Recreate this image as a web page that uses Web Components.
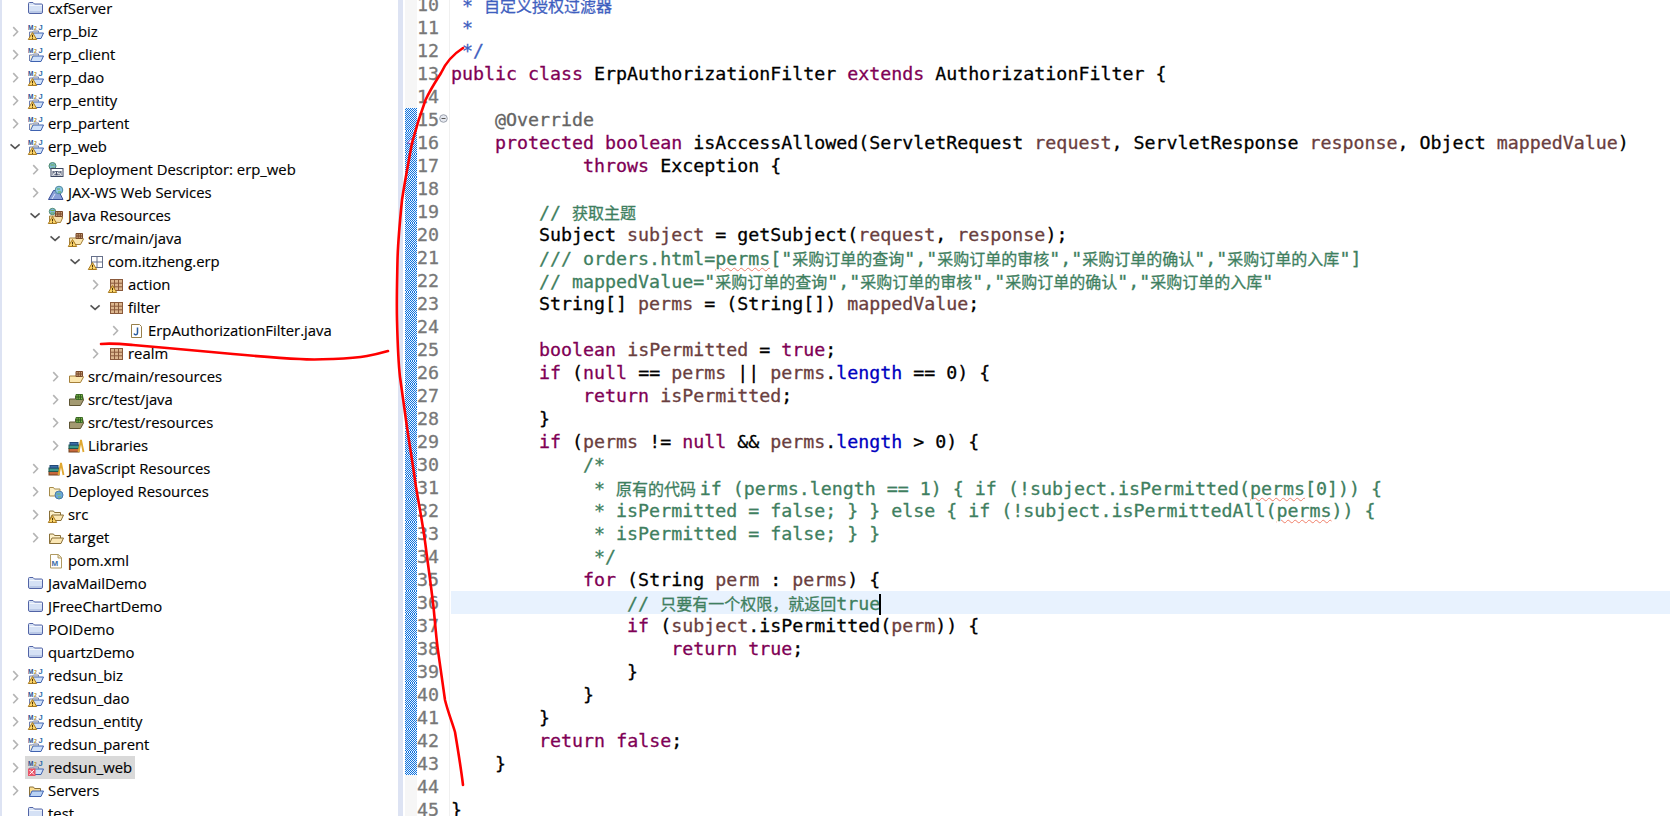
<!DOCTYPE html>
<html>
<head>
<meta charset="utf-8">
<title>ErpAuthorizationFilter.java</title>
<style>
  html, body { margin: 0; height: 100%; overflow: hidden; background: #fff; }
</style>
</head>
<body>
<ide-window>
  <project-tree>
    <tree-row icon="project">cxfServer</tree-row>
    <tree-row arrow="closed" icon="maven" warn>erp_biz</tree-row>
    <tree-row arrow="closed" icon="maven">erp_client</tree-row>
    <tree-row arrow="closed" icon="maven" warn>erp_dao</tree-row>
    <tree-row arrow="closed" icon="maven" warn>erp_entity</tree-row>
    <tree-row arrow="closed" icon="maven">erp_partent</tree-row>
    <tree-row arrow="open" icon="maven" warn>erp_web</tree-row>
    <tree-row level="1" arrow="closed" icon="descriptor">Deployment Descriptor: erp_web</tree-row>
    <tree-row level="1" arrow="closed" icon="webservice">JAX-WS Web Services</tree-row>
    <tree-row level="1" arrow="open" icon="javares" warn>Java Resources</tree-row>
    <tree-row level="2" arrow="open" icon="srcfolder" warn>src/main/java</tree-row>
    <tree-row level="3" arrow="open" icon="pkgempty" warn>com.itzheng.erp</tree-row>
    <tree-row level="4" arrow="closed" icon="pkg" warn>action</tree-row>
    <tree-row level="4" arrow="open" icon="pkg">filter</tree-row>
    <tree-row level="5" arrow="closed" icon="javafile">ErpAuthorizationFilter.java</tree-row>
    <tree-row level="4" arrow="closed" icon="pkg">realm</tree-row>
    <tree-row level="2" arrow="closed" icon="srcfolder">src/main/resources</tree-row>
    <tree-row level="2" arrow="closed" icon="testfolder">src/test/java</tree-row>
    <tree-row level="2" arrow="closed" icon="testfolder">src/test/resources</tree-row>
    <tree-row level="2" arrow="closed" icon="library">Libraries</tree-row>
    <tree-row level="1" arrow="closed" icon="library">JavaScript Resources</tree-row>
    <tree-row level="1" arrow="closed" icon="deployed">Deployed Resources</tree-row>
    <tree-row level="1" arrow="closed" icon="folder" warn>src</tree-row>
    <tree-row level="1" arrow="closed" icon="folder">target</tree-row>
    <tree-row level="1" icon="pom">pom.xml</tree-row>
    <tree-row icon="project">JavaMailDemo</tree-row>
    <tree-row icon="project">JFreeChartDemo</tree-row>
    <tree-row icon="project">POIDemo</tree-row>
    <tree-row icon="project">quartzDemo</tree-row>
    <tree-row arrow="closed" icon="maven" warn>redsun_biz</tree-row>
    <tree-row arrow="closed" icon="maven" warn>redsun_dao</tree-row>
    <tree-row arrow="closed" icon="maven" warn>redsun_entity</tree-row>
    <tree-row arrow="closed" icon="maven">redsun_parent</tree-row>
    <tree-row arrow="closed" icon="maven" error selected>redsun_web</tree-row>
    <tree-row arrow="closed" icon="servers">Servers</tree-row>
    <tree-row icon="project">test</tree-row>
  </project-tree>
  <code-editor></code-editor>
  <ink-marks></ink-marks>
</ide-window>

<script>
const ICONS = {
  project: `<path d="M.5 4V2.500a1 1 0 0 1 1-1h3.500l1.500 1.500h7a1 1 0 0 1 1 1v7a1.500 1.500 0 0 1-1.500 1.500h-11a1.500 1.500 0 0 1-1.500-1.500z" fill="#d5e1f5" stroke="#5264a6"/><path d="M1.500 4.500h12.500" stroke="#f2f6fc"/><path d="M1.500 11h12.500" stroke="#9fb0d8"/>`,
  maven: `<path d="M1.500 14V8h3l1-1h5v1.500" fill="#fdf3d3" stroke="#6f7fb0"/><path d="M2.500 14.500l2.500-5.500h10.500l-2.500 5.500z" fill="#cfe0f8" stroke="#3f62b0"/><text x="0" y="6" font-family="Liberation Sans" font-size="6.500" font-weight="700" fill="#2d4f8f">M</text><text x="6" y="6" font-family="Liberation Sans" font-size="5" font-weight="700" fill="#b08a2e">2</text><text x="10.500" y="6" font-family="Liberation Sans" font-size="7.500" font-weight="700" fill="#2d6aa8">J</text>`,
  descriptor: `<circle cx="4.500" cy="4" r="3.500" fill="#7fb7d8" stroke="#4d8a6e"/><path d="M2.500 3h4M3.500 6h3" stroke="#6bb04a"/><rect x="3" y="6.500" width="12" height="8" fill="#fff" stroke="#3c4660"/><rect x="4.500" y="9" width="9" height="4.500" fill="#46506a"/><path d="M5.500 10h2v1.500h-2v1.500h2M9.500 10h3M9.500 10v1.500h3v1.500h-3" stroke="#fff" fill="none" stroke-width=".8"/>`,
  webservice: `<path d="M.5 14.500l5-9h5l4.500 9z" fill="#8aa0d8" stroke="#3a4f98"/><path d="M4 14l3-5" stroke="#dfe6f8"/><circle cx="11" cy="5" r="3.800" fill="#8cc4e4" stroke="#4d8a9e"/><path d="M9 4h3M10 7h3" stroke="#5fae4a"/>`,
  javares: `<circle cx="4.500" cy="3.500" r="3.200" fill="#7fb7d8" stroke="#4d8a6e"/><path d="M2.500 2.500h4M3 5h3" stroke="#6bb04a"/><path d="M1.500 14V8h9l4 1v1l-2 4.500z" fill="#f6dfa8" stroke="#a5803a"/><path d="M7.500 3.500h7v5h-7z" fill="#c8a27a" stroke="#7a4b2c"/><path d="M9.800 3.500v5M12.200 3.500v5M7.500 6h7" stroke="#7a4b2c"/>`,
  srcfolder: `<path d="M1.500 13.500V7h8V3h5v4l1 1-3 5.500z" fill="#fbe6ae" stroke="#a5803a"/><path d="M8 2.500h6.500v5H8z" fill="#c8a27a" stroke="#7a4b2c"/><path d="M10.200 2.500v5M12.400 2.500v5M8 5h6.500" stroke="#7a4b2c"/>`,
  testfolder: `<path d="M1.500 13.500V7h6V4h7l1 4-3 5.500z" fill="#a39a72" stroke="#5e5433"/><path d="M8 2.500h6.500v5H8z" fill="#7fb84a" stroke="#3f6e2a"/><path d="M10.200 2.500v5M12.400 2.500v5M8 5h6.500" stroke="#2f5a1f"/>`,
  pkgempty: `<rect x="3.500" y="2.500" width="11" height="11" fill="#fff" stroke="#66708a"/><path d="M9 2.500v11M3.500 8h11" stroke="#66708a"/>`,
  pkg: `<rect x="2.500" y="2.500" width="12" height="11" fill="#dcb68e" stroke="#8a5a3c"/><path d="M6.500 2.500v11M10.500 2.500v11M2.500 6.200h12M2.500 9.800h12" stroke="#8a5a3c"/>`,
  javafile: `<path d="M3.500 1.500h8l2 2v11h-10z" fill="#fff" stroke="#98804a"/><path d="M9.500 4.500v5.500a1.800 1.800 0 0 1-3.500.5" fill="none" stroke="#2a5c9e" stroke-width="1.500"/>`,
  library: `<rect x="1" y="10.500" width="10" height="3.500" fill="#c8683c" stroke="#70401f"/><rect x="1" y="7" width="10" height="3.500" fill="#3f9a8a" stroke="#1d5a50"/><rect x="2" y="4.500" width="8" height="2.500" fill="#3a6ea8" stroke="#234a78"/><path d="M10.500 14L13 2l2.500 12" fill="none" stroke="#e0a830" stroke-width="1.800"/>`,
  deployed: `<path d="M1.500 12V3.500h4l1 1.500h5.500v7z" fill="#fdf0c8" stroke="#a58a4a"/><circle cx="11" cy="11" r="4" fill="#6aa8dc" stroke="#4a7aa8"/><path d="M8.500 10h4M10 13h3" stroke="#78b85a"/>`,
  folder: `<path d="M1.500 13.500V4h4l1 1.500h6V8" fill="#fdf0c8" stroke="#8a7038"/><path d="M1.500 13.500l2.500-5.500h11.500l-2.500 5.500z" fill="#fbe7b4" stroke="#8a7038"/>`,
  pom: `<path d="M2.500 1.500h8l3 3v10.500h-11z" fill="#fff" stroke="#b09a62"/><path d="M10 1.500v3.500h3.500" fill="#efe4c4" stroke="#b09a62"/><text x="3.500" y="12.800" font-family="Liberation Sans" font-size="8" font-weight="700" fill="#3d6ea8">M</text>`,
  servers: `<path d="M1.500 13.500V4h4l1 1.500h6V8" fill="#fbdf92" stroke="#8a7038"/><path d="M1.500 13.500l2.500-5.500h11.500l-2.500 5.500z" fill="#b9d2f4" stroke="#3f62b0"/>`
}

class TreeRow extends HTMLElement {
  constructor() {
    super();
    this.attachShadow({ mode: "open" });
  }
  connectedCallback() {
    const level = Number(this.getAttribute("level") || 0);
    const arrow = this.getAttribute("arrow");
    const name = this.getAttribute("icon");
    let chevron = "";
    if (arrow == "closed") chevron = `<path d="M3 2l4 4.200-4 4.200" fill="none" stroke="#b4b4b4" stroke-width="1.500"/>`;
    if (arrow == "open") chevron = `<path d="M.5 4l4.200 3.800L8.900 4" fill="none" stroke="#555" stroke-width="1.500"/>`;
    let badge = "";
    if (this.hasAttribute("warn")) badge = `<path d="M4.500 8.500L8.700 15.500H.3z" fill="#fbd469" stroke="#a87a20" stroke-linejoin="round"/><path d="M4.500 10.800v2.600M4.500 14v.8" stroke="#4a3006"/>`;
    if (this.hasAttribute("error")) badge = `<rect x="0" y="8.500" width="7.500" height="7.500" fill="#e8556a"/><path d="M1.500 10l4.500 4.500M6 10l-4.500 4.500" stroke="#fff"/>`;
    this.shadowRoot.innerHTML = `
      <style>
        :host {
          display: flex;
          align-items: center;
          height: 23px;
          padding-left: calc(${level} * 20px + 8px);
          font: 14.85px "Open Sans", "Noto Sans", sans-serif;
          -webkit-text-stroke: .15px #000;
          color: #000;
          white-space: nowrap;
        }
        .arrow { width: 13px; height: 13px; flex: none; margin-right: 5px; }
        .icon { width: 16px; height: 16px; flex: none; margin-right: 4px; overflow: visible; }
        .label { padding-right: 3px; line-height: 23px; }
        .bg { display: flex; align-items: center; padding-left: 3px; margin-left: -3px; }
        :host([selected]) .bg { background: #d9d9d9; }
      </style>
      <svg class="arrow" viewBox="0 0 12 12">${chevron}</svg>
      <div class="bg">
        <svg class="icon" viewBox="0 0 16 16">${ICONS[name] || ""}${badge}</svg>
        <span class="label"><slot></slot></span>
      </div>`;
  }
}
customElements.define("tree-row", TreeRow);

class ProjectTree extends HTMLElement {
  constructor() {
    super();
    this.attachShadow({ mode: "open" });
    this.shadowRoot.innerHTML = `
      <style>
        :host {
          display: block;
          flex: none;
          width: 398px;
          height: 816px;
          overflow: hidden;
          box-sizing: border-box;
          border-left: 2px solid #dde3f3;
        }
        .rows { margin-top: -3px; }
      </style>
      <div class="rows"><slot></slot></div>`;
  }
}
customElements.define("project-tree", ProjectTree);

// {k|..} keyword  {v|..} local var  {f|..} field  {a|..} annotation  {c|..} comment  {d|..} javadoc  {w|..} spell squiggle
const SOURCE = [
  [10, "{d| * 自定义授权过滤器}"],
  [11, "{d| *}"],
  [12, "{d| */}"],
  [13, "{k|public} {k|class} ErpAuthorizationFilter {k|extends} AuthorizationFilter {"],
  [14, ""],
  [15, "    {a|@Override}"],
  [16, "    {k|protected} {k|boolean} isAccessAllowed(ServletRequest {v|request}, ServletResponse {v|response}, Object {v|mappedValue})"],
  [17, "            {k|throws} Exception {"],
  [18, ""],
  [19, "        {c|// 获取主题}"],
  [20, "        Subject {v|subject} = getSubject({v|request}, {v|response});"],
  [21, "        {c|/// orders.html=}{w|perms}{c|[\"采购订单的查询\",\"采购订单的审核\",\"采购订单的确认\",\"采购订单的入库\"]}"],
  [22, "        {c|// mappedValue=\"采购订单的查询\",\"采购订单的审核\",\"采购订单的确认\",\"采购订单的入库\"}"],
  [23, "        String[] {v|perms} = (String[]) {v|mappedValue};"],
  [24, ""],
  [25, "        {k|boolean} {v|isPermitted} = {k|true};"],
  [26, "        {k|if} ({k|null} == {v|perms} || {v|perms}.{f|length} == 0) {"],
  [27, "            {k|return} {v|isPermitted};"],
  [28, "        }"],
  [29, "        {k|if} ({v|perms} != {k|null} && {v|perms}.{f|length} > 0) {"],
  [30, "            {c|/*}"],
  [31, "             {c|* 原有的代码 if (perms.length == 1) { if (!subject.isPermitted(}{w|perms}{c|[0])) {}"],
  [32, "             {c|* isPermitted = false; } } else { if (!subject.isPermittedAll(}{w|perms}{c|)) {}"],
  [33, "             {c|* isPermitted = false; } }}"],
  [34, "             {c|*/}"],
  [35, "            {k|for} (String {v|perm} : {v|perms}) {"],
  [36, "                {c|// 只要有一个权限，就返回true}"],
  [37, "                {k|if} ({v|subject}.isPermitted({v|perm})) {"],
  [38, "                    {k|return} {k|true};"],
  [39, "                }"],
  [40, "            }"],
  [41, "        }"],
  [42, "        {k|return} {k|false};"],
  [43, "    }"],
  [44, ""],
  [45, "}"]
];

function escapeHtml(s) {
  return s.replace(/&/g, "&amp;").replace(/</g, "&lt;").replace(/>/g, "&gt;");
}

// the CJK run and the space after it come from the CJK font
function cjk(s) {
  return s.replace(/[\u3000-\u9fff\uff00-\uffef]+ ?/g, m => `<span class="cjk">${m}</span>`);
}

function highlight(src) {
  let out = "";
  let i = 0;
  while (i < src.length) {
    if (src[i] == "{" && src[i + 2] == "|") {
      const kind = src[i + 1];
      let end = src.indexOf("}", i);
      if (kind == "c" || kind == "d") {
        // comments hold braces themselves: they end at the last } before the next token
        const next = src.indexOf("{w|", i);
        end = src.lastIndexOf("}", (next == -1 ? src.length : next) - 1);
      }
      out += `<span class="${kind}">${cjk(escapeHtml(src.slice(i + 3, end)))}</span>`;
      i = end + 1;
    } else {
      out += escapeHtml(src[i]);
      i++;
    }
  }
  return out;
}

class CodeEditor extends HTMLElement {
  constructor() {
    super();
    this.attachShadow({ mode: "open" });
    const rows = SOURCE.map(([n, src]) => {
      const current = n == 36 ? " current" : "";
      const caret = n == 36 ? `<i class="caret"></i>` : "";
      const ruler = n >= 15 && n <= 43 ? " changed" : "";
      const fold = n == 15 ? `<svg class="fold" viewBox="0 0 9 9"><circle cx="4.500" cy="4.500" r="3.800" fill="#e6e9f0" stroke="#9aa0ac"/><path d="M2.500 4.500h4" stroke="#555"/></svg>` : "";
      const over = n == 16 ? `<svg class="over" viewBox="0 0 8 6"><path d="M4 .5l3.500 5H.5z" fill="#f4f0fb" stroke="#8a64c0"/></svg>` : "";
      return `<div class="row">
        <div class="ruler${ruler}">${over}</div>
        <div class="num">${n}</div>
        <div class="foldcol">${fold}</div>
        <div class="text${current}">${highlight(src)}${caret}</div>
      </div>`;
    }).join("");
    this.shadowRoot.innerHTML = `
      <style>
        :host {
          display: flex;
          flex: 1;
          min-width: 0;
          height: 816px;
          overflow: hidden;
          font: 18.29px "DejaVu Sans Mono", "Noto Sans CJK SC", monospace;
          -webkit-text-stroke: .3px;
          color: #000;
        }
        .sash { flex: none; width: 5px; background: #dde3f3; margin-right: 2px; }
        .lines { flex: 1; margin-top: -7px; min-width: 0; }
        .row { display: flex; height: 23px; line-height: 23px; white-space: pre; }
        .ruler { position: relative; flex: none; width: 12px; background: #f6f6f6; }
        .ruler.changed { background: repeating-conic-gradient(#0f72dd 0 25%, #eaf4ff 0 50%) 0 0 / 2px 2px; }
        .num { flex: none; width: 22px; color: #787878; text-align: right; }
        .foldcol { flex: none; width: 10px; border-right: 1px solid #f0f0f0; position: relative; margin-right: 1px; }
        .text { flex: 1; min-width: 0; }
        .current { background: #e8f2fe; }
        .caret { display: inline-block; width: 2px; height: 21px; background: #000; vertical-align: -5px; margin-left: -1px; }
        .k { color: #7f0055; }
        .v { color: #6a3e3e; }
        .f { color: #0000c0; }
        .a { color: #646464; }
        .c { color: #3f7f5f; }
        .d { color: #3f5fbf; }
        .w { color: #3f7f5f; text-decoration: underline wavy #f0806a 1px; text-underline-offset: 2px; }
        .cjk { font: 16px "Noto Sans CJK SC", sans-serif; }
        .fold { position: absolute; left: 0; top: 6px; width: 9px; height: 9px; }
        .over { position: absolute; left: 2px; top: 7px; width: 8px; height: 6px; }
      </style>
      <div class="sash"></div>
      <div class="lines">${rows}</div>`;
  }
}
customElements.define("code-editor", CodeEditor);

// the hand-drawn red annotation strokes lying over the tree and the editor
class InkMarks extends HTMLElement {
  constructor() {
    super();
    this.attachShadow({ mode: "open" });
    this.shadowRoot.innerHTML = `
      <style>
        :host { position: absolute; inset: 0; pointer-events: none; }
        svg { display: block; width: 100%; height: 100%; }
        path { fill: none; stroke: #f00; stroke-width: 2.600; stroke-linecap: round; stroke-linejoin: round; }
      </style>
      <svg viewBox="0 0 1670 816">
        <path d="M463 48C452 55 446 62 441 73 434 84 430 90 425.500 100 420 115 416 128 412 143 408 165 405 180 402 200 400 220 398 240 397.500 260 397 285 396.500 300 397 320 397.500 340 398 360 400 377 402 392 404 405 406 420 409 442 413 465 416 487 419 505 423 525 425.500 545 428 565 431 585 433.500 607 435 622 436 635 437.500 647 440 665 443 685 445 700 448 712 452 722 455 732 458 750 461 768 463 785"/>
        <path d="M101 344C112 343 122 344 133 345 145 346 156 347 167 348 190 350 211 352 233 354 255 356 278 358 300 359 312 360 322 359.500 333 359 345 358.500 356 358 367 356 375 354.500 381 353 388 351"/>
      </svg>`;
  }
}
customElements.define("ink-marks", InkMarks);

class IdeWindow extends HTMLElement {
  constructor() {
    super();
    this.attachShadow({ mode: "open" });
    this.shadowRoot.innerHTML = `
      <style>
        :host { display: flex; position: relative; width: 1670px; height: 816px; overflow: hidden; background: #fff; }
      </style>
      <slot></slot>`;
  }
}
customElements.define("ide-window", IdeWindow);
</script>
</body>
</html>
